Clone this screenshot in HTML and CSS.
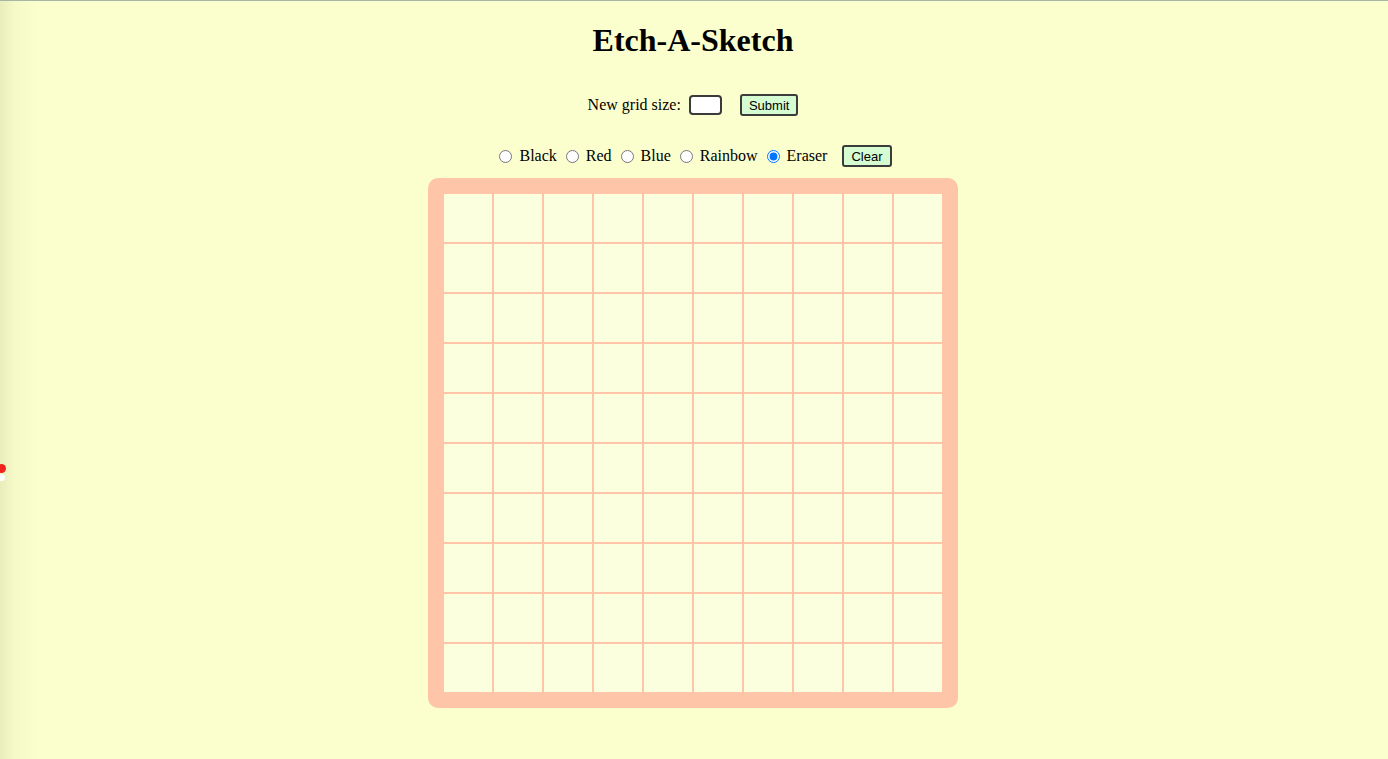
FILE: index.html
```html
<!DOCTYPE html>
<html lang="en">
<head>
<meta charset="utf-8">
<title>Etch-A-Sketch</title>
<link rel="stylesheet" href="styles.css">
</head>
<body>
<div class="edge-badge"></div>
<main class="app">
  <h1 class="title">Etch-A-Sketch</h1>
  <form class="size-form">
    <label class="size-label" for="size">New grid size:</label>
    <input class="size-input" id="size" type="text">
    <button class="btn" type="button">Submit</button>
  </form>
  <div class="modes">
    <input type="radio" name="mode" id="m-black"><label for="m-black">Black</label>
    <input type="radio" name="mode" id="m-red"><label for="m-red">Red</label>
    <input type="radio" name="mode" id="m-blue"><label for="m-blue">Blue</label>
    <input type="radio" name="mode" id="m-rainbow"><label for="m-rainbow">Rainbow</label>
    <input type="radio" name="mode" id="m-eraser" checked><label for="m-eraser">Eraser</label>
    <button class="btn btn-clear" type="button">Clear</button>
  </div>
  <div class="board">
    <div class="grid" id="grid">
      <div class="cell"></div><div class="cell"></div><div class="cell"></div><div class="cell"></div><div class="cell"></div><div class="cell"></div><div class="cell"></div><div class="cell"></div><div class="cell"></div><div class="cell"></div>
      <div class="cell"></div><div class="cell"></div><div class="cell"></div><div class="cell"></div><div class="cell"></div><div class="cell"></div><div class="cell"></div><div class="cell"></div><div class="cell"></div><div class="cell"></div>
      <div class="cell"></div><div class="cell"></div><div class="cell"></div><div class="cell"></div><div class="cell"></div><div class="cell"></div><div class="cell"></div><div class="cell"></div><div class="cell"></div><div class="cell"></div>
      <div class="cell"></div><div class="cell"></div><div class="cell"></div><div class="cell"></div><div class="cell"></div><div class="cell"></div><div class="cell"></div><div class="cell"></div><div class="cell"></div><div class="cell"></div>
      <div class="cell"></div><div class="cell"></div><div class="cell"></div><div class="cell"></div><div class="cell"></div><div class="cell"></div><div class="cell"></div><div class="cell"></div><div class="cell"></div><div class="cell"></div>
      <div class="cell"></div><div class="cell"></div><div class="cell"></div><div class="cell"></div><div class="cell"></div><div class="cell"></div><div class="cell"></div><div class="cell"></div><div class="cell"></div><div class="cell"></div>
      <div class="cell"></div><div class="cell"></div><div class="cell"></div><div class="cell"></div><div class="cell"></div><div class="cell"></div><div class="cell"></div><div class="cell"></div><div class="cell"></div><div class="cell"></div>
      <div class="cell"></div><div class="cell"></div><div class="cell"></div><div class="cell"></div><div class="cell"></div><div class="cell"></div><div class="cell"></div><div class="cell"></div><div class="cell"></div><div class="cell"></div>
      <div class="cell"></div><div class="cell"></div><div class="cell"></div><div class="cell"></div><div class="cell"></div><div class="cell"></div><div class="cell"></div><div class="cell"></div><div class="cell"></div><div class="cell"></div>
      <div class="cell"></div><div class="cell"></div><div class="cell"></div><div class="cell"></div><div class="cell"></div><div class="cell"></div><div class="cell"></div><div class="cell"></div><div class="cell"></div><div class="cell"></div>
    </div>
  </div>
</main>
</body>
</html>
```

FILE: styles.css
```css
html {
  height: 100%;
  background: #fbffcd;
}

body {
  margin: 0;
  min-height: 100%;
  border-top: 1px solid #a7b5a4;
  box-sizing: border-box;
  background: linear-gradient(to right, #e9edbb 0, #f5f9c8 14px, #fbffcd 40px);
  font-family: "Liberation Serif", "Times New Roman", serif;
  font-size: 16px;
  color: #000;
}

.edge-badge {
  position: absolute;
  left: -3px;
  top: 464px;
  width: 9px;
  height: 9px;
  border-radius: 50%;
  background: #f2231e;
  box-shadow: 0 9px 0 -1px #ffffff;
}

.app {
  margin-right: 2px;
  display: flex;
  flex-direction: column;
  align-items: center;
}

.title {
  margin: 21px 0 0;
  font-size: 32px;
  line-height: 37px;
  font-weight: bold;
}

.size-form {
  margin: 35px 0 0;
  display: flex;
  align-items: center;
  height: 22px;
}

.size-label {
  margin-right: 8px;
}

.size-input {
  box-sizing: border-box;
  width: 33px;
  height: 20px;
  margin: 0 18px 0 0;
  padding: 0 2px;
  border: 2px solid #3a3a3a;
  border-radius: 4px;
  background: #ffffff;
}

.btn {
  box-sizing: border-box;
  height: 22px;
  padding: 0 7px;
  border: 2px solid #3c3c3c;
  border-radius: 3px;
  background: #d6fcd2;
  font-family: "Liberation Sans", Arial, sans-serif;
  font-size: 13px;
  color: #000;
}

.modes {
  margin-top: 29px;
  padding-left: 5px;
  height: 22px;
  display: flex;
  align-items: center;
}

.modes input[type="radio"] {
  width: 13px;
  height: 13px;
  margin: 0 7px 0 9px;
}

.modes input[type="radio"]:first-child {
  margin-left: 0;
}

.btn-clear {
  margin-left: 15px;
}

.board {
  margin-top: 11px;
  padding: 15px;
  background: #ffc5a8;
  border-radius: 10px;
}

.grid {
  display: grid;
  grid-template-columns: repeat(10, 50px);
  grid-template-rows: repeat(10, 50px);
}

.cell {
  border: 1px solid #ffc5a8;
  background: #fbffdd;
}
```
